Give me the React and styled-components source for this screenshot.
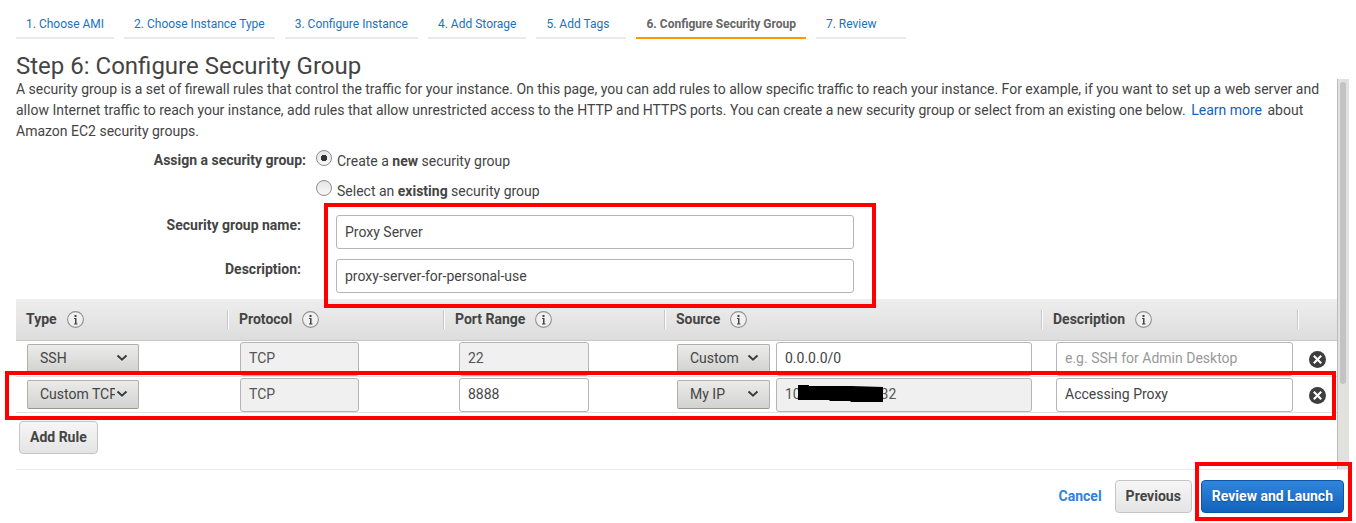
import React from "react";
import styled, { createGlobalStyle, css } from "styled-components";

const GlobalStyle = createGlobalStyle`
  * { box-sizing: border-box; }
  body {
    margin: 0;
    background: #fff;
    color: #444;
    font: 14px/21px Roboto, "Liberation Sans", sans-serif;
  }
  input, select, button { font: inherit; color: inherit; margin: 0; }
`;

const Page = styled.main`
  padding: 9px 7px 10px 16px;
`;

const Steps = styled.nav`
  display: flex;
  gap: 10px;
`;

const Step = styled.a`
  min-width: 90px;
  height: 30px;
  padding: 0 10px;
  border-bottom: 2px solid ${(p) => (p.$active ? "#ff9900" : "#eaeaea")};
  color: ${(p) => (p.$active ? "#666" : "#1a73bb")};
  font-size: 12px;
  font-weight: ${(p) => (p.$active ? 700 : 400)};
  line-height: 30px;
  text-decoration: none;
  white-space: nowrap;
`;

const Title = styled.h1`
  margin: 14px 0 0;
  font-size: 24px;
  font-weight: 400;
  line-height: 26px;
`;

const Panel = styled.section`
  display: flex;
  border-bottom: 1px solid #eaeaea;
`;

const Content = styled.div`
  flex: 1;
  min-width: 0;
  padding-bottom: 15px;
`;

const ScrollTrack = styled.div`
  width: 12px;
  padding: 3px 3px 0 2px;
  border-left: 1px solid #bbbbb8;
  background: #e1e1e0;
`;

const ScrollThumb = styled.div`
  width: 6px;
  height: 78%;
  border-radius: 3px;
  background: #c2c3c2;
`;

const Intro = styled.p`
  margin: 0;
`;

const LearnMore = styled.a`
  margin: 0 2px;
  color: #0f62bd;
  text-decoration: none;
`;

const AssignGroup = styled.div`
  display: grid;
  grid-template-columns: 290px 1fr;
  column-gap: 10px;
  padding-top: 4px;
`;

const AssignLabel = styled.span`
  font-weight: 700;
  line-height: 28px;
  text-align: right;
`;

const Choice = styled.label`
  display: flex;
  gap: 5px;
  height: 30px;
  padding-top: 4px;
  line-height: 22px;
`;

const Radio = styled.input`
  appearance: none;
  width: 16px;
  height: 16px;
  border: 1px solid #8c8c8c;
  border-radius: 50%;
  background: linear-gradient(#e6e6e6, #f8f8f8);

  &:checked {
    background: radial-gradient(circle, #2d3436 0 3px, transparent 3px),
      linear-gradient(#e6e6e6, #f8f8f8);
  }
`;

const Fields = styled.div`
  display: grid;
  grid-template-columns: 285px minmax(0, 518px);
  column-gap: 35px;
  row-gap: 10px;
  position: relative;
  padding: 9px 0 6px;
`;

const FieldLabel = styled.label`
  font-weight: 700;
  text-align: right;
`;

const Highlight = styled.div`
  position: absolute;
  border: 4px solid #f00;
  pointer-events: none;
`;

const FieldsHighlight = styled(Highlight)`
  top: -3px;
  bottom: -9px;
  left: 308px;
  width: 552px;
`;

const RowHighlight = styled(Highlight)`
  top: -6px;
  bottom: -7px;
  left: -11px;
  right: 1px;
`;

const LaunchHighlight = styled(Highlight)`
  top: -18px;
  right: -8px;
  bottom: -8px;
  left: -6px;
`;

const TextBox = styled.input`
  display: block;
  width: ${(p) => (p.$width ? `${p.$width}px` : "100%")};
  height: 34px;
  padding: 0 8px ${(p) => (p.$cell ? "2px" : "0")};
  border: 1px solid #b5b5b5;
  border-radius: 3px;
  background: ${(p) => (p.readOnly ? "#f0f0f0" : "#fff")};
  color: ${(p) => (p.readOnly ? "#555" : "#444")};
  outline: none;

  &::placeholder { color: #999; opacity: 1; }
`;

const Rules = styled.table`
  width: 100%;
  table-layout: fixed;
  border-collapse: separate;
  border-spacing: 0;
`;

const HeadRow = styled.tr`
  height: 42px;
`;

const HeadCell = styled.th`
  width: ${(p) => (p.$width ? `${p.$width}px` : "auto")};
  padding: 0;
  border-bottom: 1px solid #c8c8c8;
  background: linear-gradient(#eee, #dddddd);
  text-align: left;
`;

const HeadContent = styled.div`
  display: flex;
  align-items: center;
  gap: 10px;
  height: 19px;
  padding-left: 10px;
  ${(p) =>
    p.$divided &&
    css`
      border-left: 1px solid #c6c6c6;
      box-shadow: inset 1px 0 #fff;
      padding-left: 11px;
    `}
`;

const Row = styled.tr`
  position: relative;
  height: 36px;
`;

const Cell = styled.td`
  padding: 1px 0 0 ${(p) => p.$indent}px;
  border-bottom: 1px solid #e0e0e0;
  vertical-align: top;
  height: 36px;
`;

const CellBody = styled.div`
  display: flex;
  gap: 6px;
  position: relative;
  height: 34px;
`;

const Picker = styled.div`
  position: relative;
  flex: none;
  width: ${(p) => p.$width}px;
  padding-top: 2px;
`;

const Select = styled.select`
  appearance: none;
  display: block;
  width: 100%;
  height: 29px;
  padding: 0 23px 0 12px;
  border: 1px solid #b0b0ad;
  border-bottom-color: #999990;
  border-radius: 2px;
  background: linear-gradient(#ebebea, #d2d2d0);
  line-height: 21px;
`;

const Chevron = styled.svg`
  position: absolute;
  top: 12px;
  right: 11px;
  pointer-events: none;
`;

const Redaction = styled.svg`
  position: absolute;
  top: 7px;
  left: 121px;
`;

const SourceBox = styled(TextBox)`
  width: auto;
  flex: 1;
  min-width: 0;
  margin-right: 9px;
`;

const Remove = styled.button`
  display: block;
  width: 17px;
  height: 17px;
  margin-top: 9px;
  padding: 0;
  border: 0;
  background: none;
  svg { display: block; }
`;

const Button = styled.button`
  height: 33px;
  padding: 0 10px 1px;
  border: 1px solid #c5c5c5;
  border-radius: 4px;
  background: linear-gradient(#f6f6f6, #e4e4e4);
  font-weight: 700;
  white-space: nowrap;
`;

const PrimaryButton = styled(Button)`
  border-color: #0f55a5;
  background: linear-gradient(#2f86dc, #1263bb);
  color: #fff;
  text-shadow: 0 1px 1px rgba(0, 0, 0, 0.3);
`;

const TableActions = styled.div`
  padding: 8px 0 0 3px;
`;

const Footer = styled.footer`
  display: flex;
  align-items: center;
  justify-content: flex-end;
  padding: 10px 5px 0 0;
`;

const Cancel = styled.a`
  margin-right: 13px;
  color: #2e83dc;
  font-weight: 700;
  text-decoration: none;
`;

const Launch = styled.div`
  position: relative;
  margin-left: 9px;
`;

const InfoIcon = () => (
  <svg width="17" height="17" viewBox="0 0 17 17" aria-hidden="true">
    <circle cx="8.5" cy="8.5" r="7.9" fill="#f0f0f0" stroke="#919191" strokeWidth="1.1" />
    <path d="M7.5 4h2v2h-2zM7 7h2.5v5.5h1v1H7v-1h1V8H7z" fill="#444" />
  </svg>
);

const RemoveIcon = () => (
  <svg width="17" height="17" viewBox="0 0 17 17" aria-hidden="true">
    <circle cx="8.5" cy="8.5" r="8.5" fill="#3e3e3e" />
    <path d="M4.8 4.8l7.4 7.4M12.2 4.8l-7.4 7.4" stroke="#fff" strokeWidth="2.1" />
  </svg>
);

const Dropdown = ({ label, width, value }) => (
  <Picker $width={width}>
    <Select aria-label={label} defaultValue={value}>
      <option>{value}</option>
    </Select>
    <Chevron width="12" height="8" viewBox="0 0 12 8" aria-hidden="true">
      <path d="M1.5 2.5L6 6.7l4.5-4.2" fill="none" stroke="#fff" strokeWidth="1.5" opacity=".6" />
      <path d="M1.5 1.5L6 5.7l4.5-4.2" fill="none" stroke="#333b41" strokeWidth="2" />
    </Chevron>
  </Picker>
);

const steps = [
  "1. Choose AMI",
  "2. Choose Instance Type",
  "3. Configure Instance",
  "4. Add Storage",
  "5. Add Tags",
  "6. Configure Security Group",
  "7. Review",
];

const columns = [
  { title: "Type", width: 211 },
  { title: "Protocol", width: 216 },
  { title: "Port Range", width: 221 },
  { title: "Source" },
  { title: "Description", width: 256 },
  { title: "", width: 40 },
];

const rules = [
  { type: "SSH", port: "22", portLocked: true, origin: "Custom", source: "0.0.0.0/0", note: "" },
  {
    type: "Custom TCP Rule",
    port: "8888",
    origin: "My IP",
    source: `10${"\u00a0".repeat(23)}32`,
    sourceLocked: true,
    note: "Accessing Proxy",
    highlighted: true,
  },
];

const RuleRow = ({ rule }) => (
  <Row>
    <Cell $indent={11}>
      <CellBody>
        <Dropdown label="Type" width={112} value={rule.type} />
      </CellBody>
    </Cell>
    <Cell $indent={13}>
      <TextBox $cell $width={119} aria-label="Protocol" defaultValue="TCP" readOnly />
    </Cell>
    <Cell $indent={16}>
      <TextBox $cell $width={130} aria-label="Port range" defaultValue={rule.port} readOnly={!!rule.portLocked} />
    </Cell>
    <Cell $indent={13}>
      <CellBody>
        <Dropdown label="Source" width={93} value={rule.origin} />
        <SourceBox $cell aria-label="Source address" defaultValue={rule.source} readOnly={!!rule.sourceLocked} />
        {rule.sourceLocked && (
          <Redaction width="86" height="17" viewBox="0 0 86 17" aria-hidden="true">
            <path d="M0 0h11v1h42l32 1v15H53l-1-1H32l-1-1H0z" fill="#000" />
          </Redaction>
        )}
      </CellBody>
    </Cell>
    <Cell $indent={15}>
      <TextBox
        $cell
        $width={237}
        aria-label="Rule description"
        placeholder="e.g. SSH for Admin Desktop"
        defaultValue={rule.note}
      />
    </Cell>
    <Cell $indent={12}>
      <Remove type="button" aria-label="Remove rule">
        <RemoveIcon />
      </Remove>
      {rule.highlighted && <RowHighlight />}
    </Cell>
  </Row>
);

export default function App() {
  return (
    <>
      <GlobalStyle />
      <Page>
        <Steps>
          {steps.map((step, i) => (
            <Step key={step} href="#" $active={i === 5}>
              {step}
            </Step>
          ))}
        </Steps>
        <Title>Step 6: Configure Security Group</Title>
        <Panel>
          <Content>
            <Intro>
              A security group is a set of firewall rules that control the traffic for your instance. On this page, you
              can add rules to allow specific traffic to reach your instance. For example, if you want to set up a web
              server and allow Internet traffic to reach your instance, add rules that allow unrestricted access to the
              HTTP and HTTPS ports. You can create a new security group or select from an existing one below.{" "}
              <LearnMore href="#">Learn more</LearnMore> about Amazon EC2 security groups.
            </Intro>
            <AssignGroup role="radiogroup" aria-labelledby="assign">
              <AssignLabel id="assign">Assign a security group:</AssignLabel>
              <div>
                <Choice>
                  <Radio type="radio" name="group" defaultChecked />
                  <span>
                    Create a <b>new</b> security group
                  </span>
                </Choice>
                <Choice>
                  <Radio type="radio" name="group" />
                  <span>
                    Select an <b>existing</b> security group
                  </span>
                </Choice>
              </div>
            </AssignGroup>
            <Fields>
              <FieldLabel htmlFor="name">Security group name:</FieldLabel>
              <TextBox id="name" defaultValue="Proxy Server" />
              <FieldLabel htmlFor="description">Description:</FieldLabel>
              <TextBox id="description" defaultValue="proxy-server-for-personal-use" />
              <FieldsHighlight />
            </Fields>
            <Rules>
              <thead>
                <HeadRow>
                  {columns.map((col, i) => (
                    <HeadCell key={col.title} $width={col.width}>
                      <HeadContent $divided={i > 0}>
                        {col.title}
                        {col.title && <InfoIcon />}
                      </HeadContent>
                    </HeadCell>
                  ))}
                </HeadRow>
              </thead>
              <tbody>
                {rules.map((rule) => (
                  <RuleRow key={rule.type} rule={rule} />
                ))}
              </tbody>
            </Rules>
            <TableActions>
              <Button type="button">Add Rule</Button>
            </TableActions>
          </Content>
          <ScrollTrack>
            <ScrollThumb />
          </ScrollTrack>
        </Panel>
        <Footer>
          <Cancel href="#">Cancel</Cancel>
          <Button type="button">Previous</Button>
          <Launch>
            <PrimaryButton type="button">Review and Launch</PrimaryButton>
            <LaunchHighlight />
          </Launch>
        </Footer>
      </Page>
    </>
  );
}
